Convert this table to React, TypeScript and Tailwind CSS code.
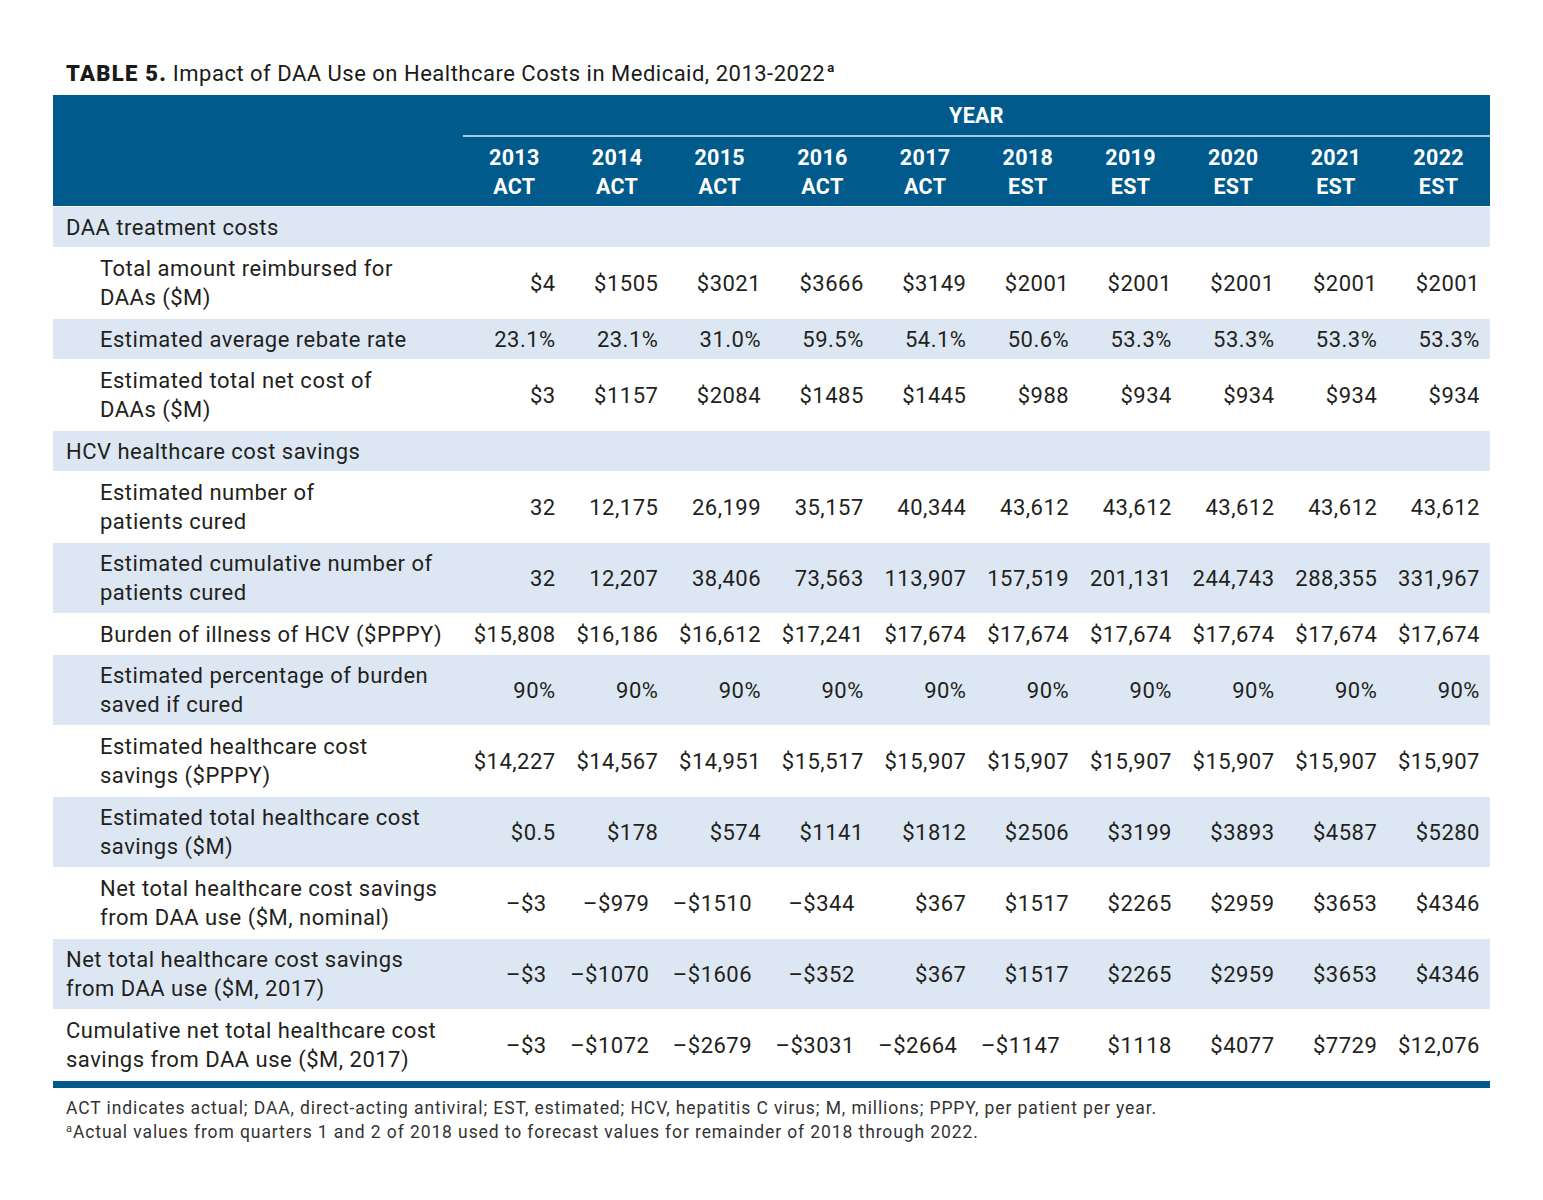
import React from "react";

type Row = {
  kind: "section" | "data";
  indent?: boolean;
  label: string[];
  vals?: string[];
  light: boolean;
};

const years = [
  ["2013", "ACT"],
  ["2014", "ACT"],
  ["2015", "ACT"],
  ["2016", "ACT"],
  ["2017", "ACT"],
  ["2018", "EST"],
  ["2019", "EST"],
  ["2020", "EST"],
  ["2021", "EST"],
  ["2022", "EST"],
];

const rows: Row[] = [
  { kind: "section", label: ["DAA treatment costs"], light: true },
  {
    kind: "data",
    indent: true,
    label: ["Total amount reimbursed for", "DAAs ($M)"],
    vals: ["$4", "$1505", "$3021", "$3666", "$3149", "$2001", "$2001", "$2001", "$2001", "$2001"],
    light: false,
  },
  {
    kind: "data",
    indent: true,
    label: ["Estimated average rebate rate"],
    vals: ["23.1%", "23.1%", "31.0%", "59.5%", "54.1%", "50.6%", "53.3%", "53.3%", "53.3%", "53.3%"],
    light: true,
  },
  {
    kind: "data",
    indent: true,
    label: ["Estimated total net cost of", "DAAs ($M)"],
    vals: ["$3", "$1157", "$2084", "$1485", "$1445", "$988", "$934", "$934", "$934", "$934"],
    light: false,
  },
  { kind: "section", label: ["HCV healthcare cost savings"], light: true },
  {
    kind: "data",
    indent: true,
    label: ["Estimated number of", "patients cured"],
    vals: ["32", "12,175", "26,199", "35,157", "40,344", "43,612", "43,612", "43,612", "43,612", "43,612"],
    light: false,
  },
  {
    kind: "data",
    indent: true,
    label: ["Estimated cumulative number of", "patients cured"],
    vals: ["32", "12,207", "38,406", "73,563", "113,907", "157,519", "201,131", "244,743", "288,355", "331,967"],
    light: true,
  },
  {
    kind: "data",
    indent: true,
    label: ["Burden of illness of HCV ($PPPY)"],
    vals: ["$15,808", "$16,186", "$16,612", "$17,241", "$17,674", "$17,674", "$17,674", "$17,674", "$17,674", "$17,674"],
    light: false,
  },
  {
    kind: "data",
    indent: true,
    label: ["Estimated percentage of burden", "saved if cured"],
    vals: ["90%", "90%", "90%", "90%", "90%", "90%", "90%", "90%", "90%", "90%"],
    light: true,
  },
  {
    kind: "data",
    indent: true,
    label: ["Estimated healthcare cost", "savings ($PPPY)"],
    vals: ["$14,227", "$14,567", "$14,951", "$15,517", "$15,907", "$15,907", "$15,907", "$15,907", "$15,907", "$15,907"],
    light: false,
  },
  {
    kind: "data",
    indent: true,
    label: ["Estimated total healthcare cost", "savings ($M)"],
    vals: ["$0.5", "$178", "$574", "$1141", "$1812", "$2506", "$3199", "$3893", "$4587", "$5280"],
    light: true,
  },
  {
    kind: "data",
    indent: true,
    label: ["Net total healthcare cost savings", "from DAA use ($M, nominal)"],
    vals: ["–$3", "–$979", "–$1510", "–$344", "$367", "$1517", "$2265", "$2959", "$3653", "$4346"],
    light: false,
  },
  {
    kind: "data",
    indent: false,
    label: ["Net total healthcare cost savings", "from DAA use ($M, 2017)"],
    vals: ["–$3", "–$1070", "–$1606", "–$352", "$367", "$1517", "$2265", "$2959", "$3653", "$4346"],
    light: true,
  },
  {
    kind: "data",
    indent: false,
    label: ["Cumulative net total healthcare cost", "savings from DAA use ($M, 2017)"],
    vals: ["–$3", "–$1072", "–$2679", "–$3031", "–$2664", "–$1147", "$1118", "$4077", "$7729", "$12,076"],
    light: false,
  },
];

const font = { fontFamily: "Roboto, 'Noto Sans', sans-serif" };

export default function App() {
  return (
    <div className="w-[1543px] h-[1200px] bg-white text-[#231f20]" style={font}>
      <div className="pl-[53px] pt-[60px]">
        <div className="pl-[13px] h-[35px] text-[22px] leading-[28px] text-[#1a1a1a] whitespace-nowrap">
          <span className="font-black tracking-[1.3px]">TABLE 5.</span>{" "}
          <span className="tracking-[0.5px]">Impact of DAA Use on Healthcare Costs in Medicaid, 2013-2022</span>
          <sup className="text-[13px] font-bold relative top-[-9px] ml-[2px]">a</sup>
        </div>
        <div className="w-[1437px]">
          {/* Header */}
          <div className="bg-[#005a8c] text-white font-bold text-[21.5px] tracking-[0.3px]">
            <div className="grid grid-cols-[410px_1fr]">
              <div />
              <div>
                <div className="h-[40px] flex items-center justify-center leading-none pt-[2px]">YEAR</div>
                <div className="h-[2px] bg-[#a9c9e3]" />
              </div>
            </div>
            <div className="grid grid-cols-[410px_repeat(10,1fr)] h-[69px]">
              <div />
              {years.map(([y, t]) => (
                <div key={y} className="flex flex-col items-center justify-center leading-[29px]">
                  <span>{y}</span>
                  <span>{t}</span>
                </div>
              ))}
            </div>
          </div>
          {/* Body */}
          <div className="flex flex-col gap-[1px] pt-[1px]">
            {rows.map((r, i) => {
              const two = r.label.length > 1;
              return (
                <div
                  key={i}
                  className={`grid grid-cols-[410px_repeat(10,1fr)] text-[22px] tracking-[0.5px] ${
                    two ? "h-[70px]" : "h-[40px]"
                  } ${r.light ? "bg-[#dce7f3]" : "bg-white"}`}
                >
                  <div
                    className={`flex flex-col justify-center leading-[29px] ${
                      r.kind === "section" || !r.indent ? "pl-[13px]" : "pl-[47px]"
                    } ${r.kind === "section" ? "col-span-11" : ""}`}
                  >
                    {r.label.map((l) => (
                      <span key={l} className="whitespace-nowrap">
                        {l}
                      </span>
                    ))}
                  </div>
                  {r.vals?.map((v, j) => (
                    <div
                      key={j}
                      className={`flex items-center justify-end whitespace-nowrap ${
                        v.startsWith("–") ? "pr-[19px]" : "pr-[10px]"
                      }`}
                    >
                      {v}
                    </div>
                  ))}
                </div>
              );
            })}
          </div>
          <div className="h-[7px] bg-[#005a8c] mt-[1px]" />
        </div>
        <div className="pl-[13px] pt-[8px] text-[17.5px] tracking-[0.9px] leading-[24px] text-[#333] whitespace-nowrap">
          <div>
            ACT indicates actual; DAA, direct-acting antiviral; EST, estimated; HCV, hepatitis C virus; M, millions; PPPY, per patient per year.
          </div>
          <div>
            <sup className="text-[11px] relative top-[-6px]">a</sup>Actual values from quarters 1 and 2 of 2018 used to forecast values for remainder of 2018 through 2022.
          </div>
        </div>
      </div>
    </div>
  );
}
